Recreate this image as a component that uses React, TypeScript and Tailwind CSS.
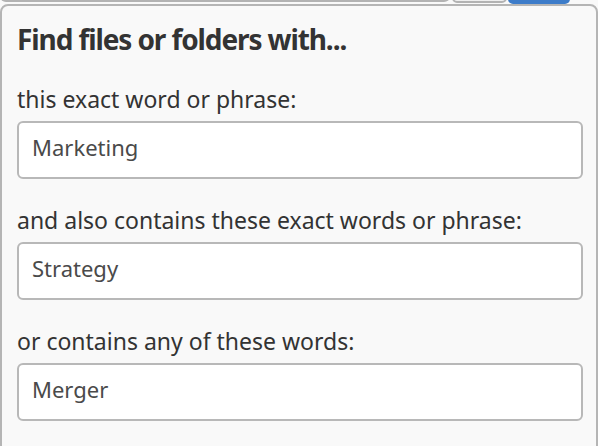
import React from "react";

const font = { fontFamily: '"Noto Sans", "Open Sans", sans-serif' };

function Field({ label, value }: { label: string; value: string }) {
  return (
    <div className="flex flex-col">
      <div className="text-[23px] leading-[28px] text-[#333333]">{label}</div>
      <div className="mt-[8px] h-[58px] w-[566px] rounded-[6px] border-2 border-[#b8b8b8] bg-white flex items-start pt-[10px] pl-[13px] text-[22px] leading-[28px] text-[#4a4a4a]">
        {value}
      </div>
    </div>
  );
}

export default function App() {
  return (
    <div className="w-[598px] h-[446px] overflow-hidden bg-[#f9f9f9]" style={font}>
      <div className="flex items-end h-[4px] overflow-hidden">
        <div className="w-[450px] h-[10px] shrink-0 border-b-2 border-r-2 border-l-2 border-[#b3b3b3] rounded-b-[6px] bg-white self-end mb-[2px]" />
        <div className="ml-[2px] w-[55px] h-[10px] shrink-0 border-2 border-[#b3b3b3] rounded-b-[5px] bg-[#efefef] mb-[1px]" />
        <div className="ml-[1px] w-[62px] h-[10px] shrink-0 rounded-b-[5px] bg-[#3d7cc9]" />
      </div>
      <div className="w-[598px] h-[460px] rounded-t-[8px] border-2 border-[#b5b5b5] bg-[#f9f9f9] pl-[15px] pt-[15px]">
        <div className="text-[28px] leading-[36px] font-bold tracking-[-1.1px] text-[#333333]">Find files or folders with...</div>
        <div className="mt-[28px] flex flex-col gap-[27px]">
          <Field label="this exact word or phrase:" value="Marketing" />
          <Field label="and also contains these exact words or phrase:" value="Strategy" />
          <Field label="or contains any of these words:" value="Merger" />
        </div>
      </div>
    </div>
  );
}
